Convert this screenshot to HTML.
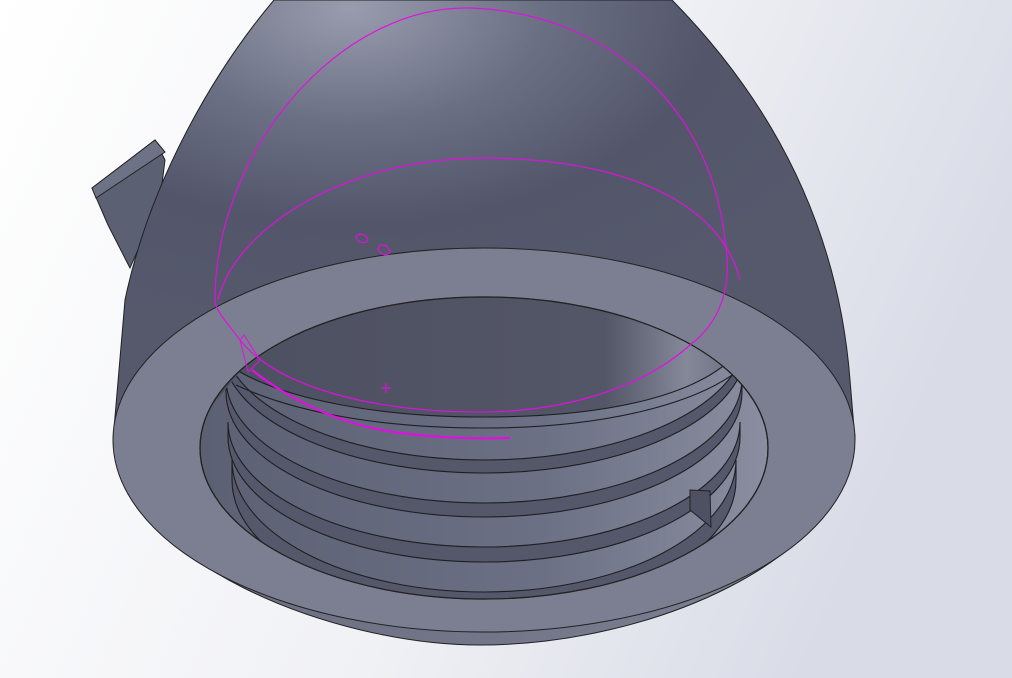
<!DOCTYPE html><html><head><style>html,body{margin:0;padding:0;width:1012px;height:678px;overflow:hidden}</style></head><body>
<svg width="1012" height="678" viewBox="0 0 1012 678" xmlns="http://www.w3.org/2000/svg">
<defs>
<linearGradient id="bg" x1="0" y1="0" x2="1" y2="0.3"><stop offset="0" stop-color="#ffffff"/><stop offset="0.6" stop-color="#f0f1f5"/><stop offset="1" stop-color="#d9dce7"/></linearGradient>
<radialGradient id="dome" cx="0.32" cy="0.02" r="0.75"><stop offset="0" stop-color="#999cae"/><stop offset="0.35" stop-color="#6b6f83"/><stop offset="0.65" stop-color="#53566a"/><stop offset="1" stop-color="#56596c"/></radialGradient>
<linearGradient id="side" x1="0" y1="0" x2="1" y2="0"><stop offset="0" stop-color="#6a6e81"/><stop offset="0.5" stop-color="#727688"/><stop offset="1" stop-color="#7e8295"/></linearGradient>
<linearGradient id="cav" x1="0" y1="0" x2="1" y2="0"><stop offset="0" stop-color="#4d5061"/><stop offset="0.75" stop-color="#535667"/><stop offset="0.9" stop-color="#848899"/><stop offset="1" stop-color="#6a6e80"/></linearGradient>
<linearGradient id="thr" x1="0" y1="0" x2="1" y2="0"><stop offset="0" stop-color="#5c6073"/><stop offset="0.6" stop-color="#6c7084"/><stop offset="1" stop-color="#8a8ea0"/></linearGradient>
<clipPath id="hole"><ellipse cx="484" cy="448" rx="284" ry="151"/></clipPath>
</defs>
<rect width="1012" height="678" fill="url(#bg)"/>
<path d="M92 188 L155 140 L165 160 L160 200 L130 268 L108 225 Z" fill="#5c6073" stroke="#222" stroke-width="1"/>
<path d="M92 188 L155 140 L165 152 L96 198 Z" fill="#6e7286" stroke="#222" stroke-width="1"/>
<path d="M274 0 C215 70 150 180 125 300 L113 440 L855 440 L850 380 C840 250 790 120 672 0 Z" fill="url(#dome)" stroke="#222" stroke-width="1"/>
<path d="M113 440 C120 560 330 645 480 645 C650 645 850 560 855 435 Z" fill="url(#side)" stroke="#222" stroke-width="1"/>
<ellipse cx="484" cy="440" rx="371" ry="192" fill="#7b7f91" stroke="#222" stroke-width="1"/>
<ellipse cx="484" cy="448" rx="284" ry="151" fill="url(#thr)" stroke="#222" stroke-width="1.2"/>
<g clip-path="url(#hole)" stroke="#1e1e24" stroke-width="1.1">
<path d="M222 335 A262 125 0 0 0 746 335 L746 348 A262 125 0 0 1 222 348 Z" fill="#54586a"/>
<path d="M226 378 A258 125 0 0 0 742 378 L742 392 A258 125 0 0 1 226 392 Z" fill="#54586a"/>
<path d="M228 422 A256 125 0 0 0 740 422 L740 437 A256 125 0 0 1 228 437 Z" fill="#54586a"/>
<path d="M232 460 A252 132 0 0 0 736 460 L736 480 A252 132 0 0 1 232 480 Z" fill="#54586a"/>
<path d="M200 420 L220 300 C300 297 420 297 484 297 C560 297 690 310 740 350 C700 398 600 417 484 417 C380 417 290 400 240 372 Z" fill="url(#cav)" stroke="none"/>
<path d="M240 372 C290 400 380 417 484 417 C600 417 700 398 740 350" fill="none"/>
<path d="M236 385 C300 415 390 428 484 428 C600 428 700 405 745 365" fill="none"/>
</g>
<ellipse cx="484" cy="448" rx="284" ry="151" fill="none" stroke="#222" stroke-width="1.2"/>
<path d="M690 490 L710 491 L711 527 L690 510 Z" fill="#4e5163" stroke="#222" stroke-width="1"/>
<g fill="none" stroke="#e010e0" stroke-width="1.2">
<path d="M215 300 C215 150 340 5 470 8 C600 12 710 100 725 240 C735 300 710 330 690 345 C640 390 560 412 480 412 C380 412 280 390 240 340 C225 320 215 310 215 300"/>
<path d="M218 300 C235 230 340 160 480 158 C620 158 720 200 740 280"/>
<path d="M252 370 C290 400 340 425 400 433 C440 438 480 439 510 438" stroke-width="2.2"/>
<path d="M240 340 L244 335 L260 360 L248 372 Z" stroke-width="1"/>
<path d="M356 237 C358 232 366 234 368 240 C366 244 358 244 356 237 Z"/>
<path d="M378 248 C380 243 388 244 390 252 C388 256 380 256 378 248 Z"/>
<path d="M381 388 h10 M386 383 v10"/>
</g>
</svg>
</body></html>
